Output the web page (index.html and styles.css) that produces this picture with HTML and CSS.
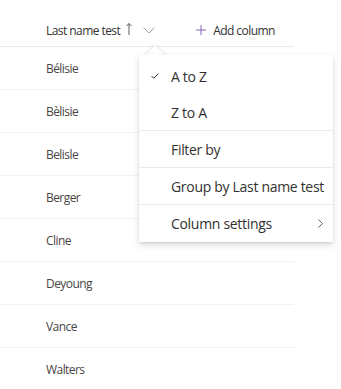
FILE: index.html
```html
<!DOCTYPE html>
<html>
<head>
<meta charset="utf-8">
<link rel="stylesheet" href="styles.css">
</head>
<body>
<div class="page">
  <div class="list">
    <div class="header">
      <div class="col-head">
        <span class="col-title">Last name test</span>
        <svg class="sort-icon" width="6" height="12" viewBox="0 0 6 12"><path d="M3 0.5V12M0.5 3L3 0.5L5.5 3" fill="none" stroke="#605e5c" stroke-width="1"/></svg>
        <svg class="chev-down" width="12" height="7" viewBox="0 0 12 7"><path d="M0.5 0.5L6 6L11.5 0.5" fill="none" stroke="#a19f9d" stroke-width="1"/></svg>
      </div>
      <div class="add-col">
        <svg class="plus" width="10" height="10" viewBox="0 0 10 10"><path d="M5 0V10M0 5H10" stroke="#8764b8" stroke-width="1"/></svg>
        <span>Add column</span>
      </div>
    </div>
    <div class="row"><span>Bélisie</span></div>
    <div class="row"><span>Bèlisie</span></div>
    <div class="row"><span>Belisle</span></div>
    <div class="row"><span>Berger</span></div>
    <div class="row"><span>Cline</span></div>
    <div class="row"><span>Deyoung</span></div>
    <div class="row"><span>Vance</span></div>
    <div class="row"><span>Walters</span></div>
  </div>

  <div class="menu">
    <div class="beak"></div>
    <div class="menu-body">
      <div class="item">
        <svg class="check" width="8" height="6" viewBox="0 0 8 6"><path d="M0.5 3L2.8 5.3L7.5 0.5" fill="none" stroke="#323130" stroke-width="1"/></svg>
        <span class="label">A to Z</span>
      </div>
      <div class="item"><span class="label">Z to A</span></div>
      <div class="divider"></div>
      <div class="item"><span class="label">Filter by</span></div>
      <div class="divider"></div>
      <div class="item"><span class="label">Group by Last name test</span></div>
      <div class="divider"></div>
      <div class="item">
        <span class="label">Column settings</span>
        <svg class="chev-right" width="5" height="9" viewBox="0 0 5 9"><path d="M0.5 0.5L4.5 4.5L0.5 8.5" fill="none" stroke="#605e5c" stroke-width="1"/></svg>
      </div>
    </div>
  </div>
</div>
</body>
</html>
```

FILE: styles.css
```css
* { box-sizing: border-box; }
html, body { margin: 0; padding: 0; background: #fff; }
body {
  font-family: "Open Sans", "Noto Sans", sans-serif;
  letter-spacing: -0.035em;
  color: #323130;
  width: 341px;
  height: 389px;
  overflow: hidden;
}
.page { position: relative; width: 341px; height: 389px; }
.list { width: 294px; }
.header {
  height: 47px;
  border-bottom: 1px solid #edebe9;
  display: flex;
  align-items: center;
  padding-top: 14px;
  padding-left: 46px;
  font-size: 12px;
}
.col-head { display: flex; align-items: center; }
.col-title { color: #323130; }
.sort-icon { margin-left: 6px; margin-top: -2px; }
.chev-down { margin-left: 11px; margin-top: 1px; }
.add-col {
  display: flex;
  align-items: center;
  margin-left: 41px;
  color: #323130;
}
.plus { margin-right: 7px; }
.row {
  height: 43px;
  border-bottom: 1px solid #f3f2f1;
  display: flex;
  align-items: center;
  padding-left: 46px;
  font-size: 12px;
  color: #484644;
}
.menu {
  position: absolute;
  left: 139px;
  top: 55px;
  width: 194px;
}
.beak {
  position: absolute;
  left: 9px;
  top: -7px;
  width: 14px;
  height: 14px;
  background: #fff;
  transform: rotate(45deg);
  box-shadow: 0 0 3px rgba(0,0,0,0.18);
}
.menu-body {
  position: relative;
  background: #fff;
  box-shadow: 0 3.2px 7.2px rgba(0,0,0,0.132), 0 0.6px 1.8px rgba(0,0,0,0.108);
  padding: 3px 0 1px 0;
}
.item {
  height: 36px;
  display: flex;
  align-items: center;
  padding-left: 32px;
  padding-right: 10px;
  font-size: 14px;
  letter-spacing: -0.022em;
  color: #323130;
  position: relative;
  white-space: nowrap;
}
.check { position: absolute; left: 12px; top: 15px; }
.label { flex: 1; }
.chev-right { margin-top: 1px; }
.divider { height: 1px; background: #edebe9; }
```
